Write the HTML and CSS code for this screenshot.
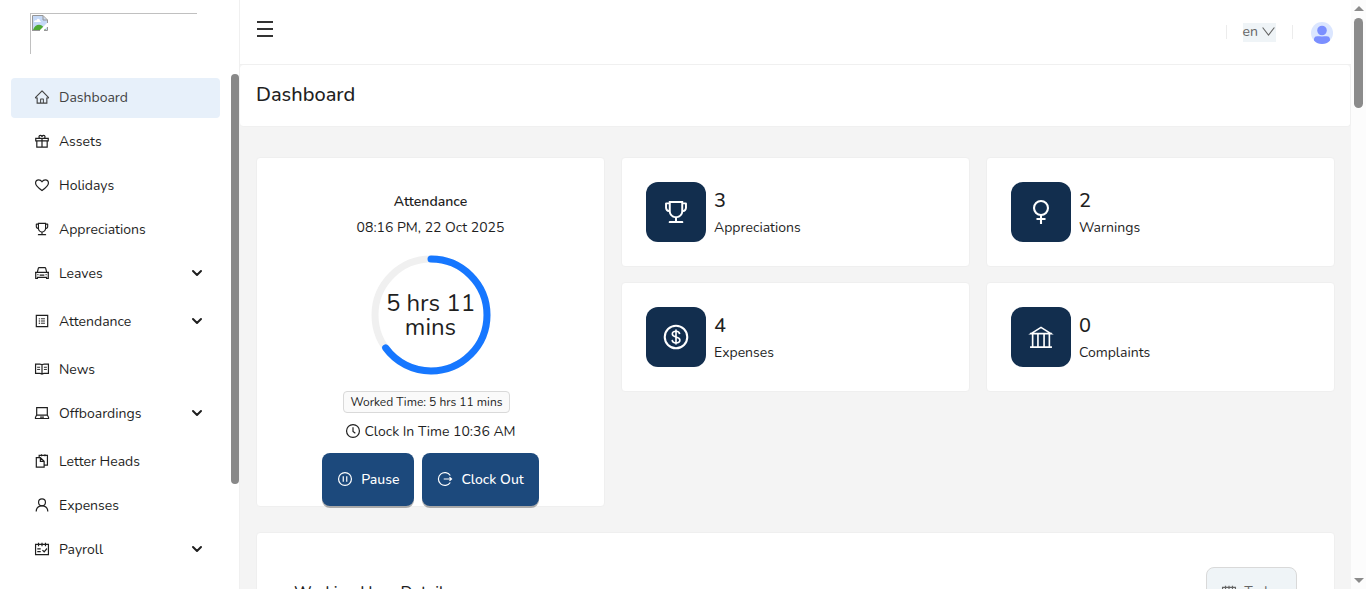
FILE: index.html
```html
<!DOCTYPE html>
<html lang="en">
<head>
<meta charset="utf-8">
<title>Dashboard</title>
<link rel="stylesheet" href="styles.css">
</head>
<body>
<svg class="sprite" aria-hidden="true">
  <symbol id="i-home" viewBox="0 0 1024 1024"><path d="M946.5 505L560.1 118.800l-25.900-25.900a31.500 31.500 0 0 0-44.400 0L77.500 505a63.900 63.900 0 0 0-18.800 46c.4 35.200 29.700 63.300 64.900 63.300h42.500V940h691.800V614.300h43.400c17.100 0 33.200-6.700 45.300-18.800a63.600 63.600 0 0 0 18.700-45.300c0-17-6.700-33.100-18.800-45.200zM568 868H456V664h112v204zm217.900-325.700V868H632V640c0-22.100-17.900-40-40-40H432c-22.100 0-40 17.900-40 40v228H238.100V542.300h-96l370-369.700 23.100 23.100L882 542.300h-96.100z"/></symbol>
  <symbol id="i-trophy" viewBox="0 0 1024 1024"><path d="M868 160h-92v-40c0-4.400-3.600-8-8-8H256c-4.400 0-8 3.600-8 8v40h-92a44 44 0 0 0-44 44v148c0 81.700 60 149.600 138.200 162C265.700 630.200 359 721.700 476 734.500v105.200H280c-17.700 0-32 14.300-32 32V904c0 4.400 3.600 8 8 8h512c4.400 0 8-3.600 8-8v-32.300c0-17.700-14.300-32-32-32H548V734.500C665 721.700 758.300 630.200 773.800 514 852 501.600 912 433.700 912 352V204a44 44 0 0 0-44-44zM184 352V232h64v207.600a92 92 0 0 1-64-87.600zm520 128c0 49.100-19.100 95.400-53.900 130.100-34.800 34.800-81 53.900-130.100 53.900h-16c-49.100 0-95.400-19.100-130.100-53.900-34.800-34.800-53.900-81-53.900-130.100V184h384v296zm136-128c0 41-26.900 75.800-64 87.600V232h64v120z"/></symbol>
  <symbol id="i-gift" viewBox="0 0 1024 1024"><g class="ln"><path d="M112 346h800v160H112zM180 506v402h664V506M512 346v562M512 346H400a98 98 0 1 1 112-98a98 98 0 1 1 112 98z"/></g></symbol>
  <symbol id="i-heart" viewBox="0 0 1024 1024"><g class="ln"><path d="M512 868C300 716 100 580 100 388c0-120 90-208 202-208 88 0 164 52 210 124 46-72 122-124 210-124 112 0 202 88 202 208 0 192-200 328-412 480z"/></g></symbol>
  <symbol id="i-car" viewBox="0 0 1024 1024"><g class="ln"><path d="M64 470h896M210 470l70-274q10-32 44-32h376q34 0 44 32l70 274M210 440l-100 70v354h110v-72h584v72h110V510l-100-70M400 600v52h224v-52"/></g><circle cx="250" cy="620" r="42"/><circle cx="774" cy="620" r="42"/></symbol>
  <symbol id="i-list" viewBox="0 0 1024 1024"><g class="ln"><path d="M148 148h728v728H148z"/></g><g class="thin"><path d="M440 370h260M440 512h260M440 654h260"/></g><circle cx="340" cy="370" r="42"/><circle cx="340" cy="512" r="42"/><circle cx="340" cy="654" r="42"/></symbol>
  <symbol id="i-read" viewBox="0 0 1024 1024"><g class="ln"><path d="M100 196h268q144 0 144 60 0-60 144-60h268v600H656q-100 0-144 50-44-50-144-50H100zM512 256v580"/></g><g class="thin"><path d="M200 400h190M200 540h190M634 400h190M634 540h190"/></g></symbol>
  <symbol id="i-laptop" viewBox="0 0 1024 1024"><g class="ln"><path d="M172 172h680v470H172zM172 642L94 790v74h836v-74l-78-148M390 770h244"/></g></symbol>
  <symbol id="i-snippets" viewBox="0 0 1024 1024"><g class="ln"><path d="M148 292h260l240 240v376H148zM408 292v240h240M330 292V150h530v620H668M480 80v130M700 80v130"/></g></symbol>
  <symbol id="i-user" viewBox="0 0 1024 1024"><g class="ln"><circle cx="512" cy="340" r="220"/><path d="M140 930c8-230 160-366 372-366s364 136 372 366"/></g></symbol>
  <symbol id="i-schedule" viewBox="0 0 1024 1024"><g class="ln"><path d="M100 212h824v660H100zM290 110v220M512 110v220M734 110v220M210 500h220M210 680h220M540 580l110 110 180-210"/></g></symbol>
  <symbol id="i-calendar" viewBox="0 0 1024 1024"><g class="ln"><path d="M100 212h824v660H100zM290 110v220M512 110v220M734 110v220"/></g></symbol>
  <symbol id="i-chevron" viewBox="0 0 12 8"><path d="M2 2l4 4 4-4" fill="none" stroke="currentColor" stroke-width="2" stroke-linecap="round" stroke-linejoin="round"/></symbol>
  <symbol id="i-down" viewBox="0 0 1024 1024"><g class="ln"><path d="M110 240l402 520 402-520"/></g></symbol>
  <symbol id="i-clock" viewBox="0 0 1024 1024"><g class="ln"><circle cx="512" cy="512" r="412"/><path d="M512 270v270l150 110"/></g></symbol>
  <symbol id="i-pause" viewBox="0 0 1024 1024"><g class="ln"><circle cx="512" cy="512" r="412"/><path d="M400 330v364M624 330v364"/></g></symbol>
  <symbol id="i-logout" viewBox="0 0 1024 1024"><g class="ln"><path d="M850 290a412 412 0 1 0 0 444M430 512h460M800 400l130 112-130 112"/></g></symbol>
  <symbol id="i-woman" viewBox="0 0 1024 1024"><g class="ln"><circle cx="512" cy="366" r="255"/><path d="M512 620v330M347 768h330"/></g></symbol>
  <symbol id="i-dollar" viewBox="0 0 1024 1024"><g class="ln"><circle cx="512" cy="512" r="412"/></g><path d="M646 410c-8-70-60-108-134-108-80 0-134 40-134 102 0 66 54 88 134 106 84 20 142 42 142 112 0 68-58 106-142 106-80 0-134-40-140-112M512 240v544" fill="none" stroke="currentColor" stroke-width="60"/></symbol>
  <symbol id="i-bank" viewBox="0 0 1024 1024"><g class="thin"><path d="M112 880h800M150 390L512 160l362 230zM112 390h800M206 390v490M400 390v490M624 390v490M818 390v490"/></g></symbol>
</svg>

<div class="app">
  <aside class="sidebar">
    <div class="brand">
      <div class="brand-image">
        <svg width="16" height="16" viewBox="0 0 16 16" aria-hidden="true">
          <path d="M0 0h11l5 5v11H0z" fill="#fff"/>
          <path d="M1 1h9.500l4.500 4.500V15H1z" fill="#c5d9f7"/>
          <path d="M2 7c0-2 2-2 2.500-1.500C5 3 8 3.500 8 6c1 0 1 1 1 1z" fill="#fff"/>
          <path d="M1 15c2-6 8-7 11-2l2 2z" fill="#4faa35"/>
          <path d="M7 16l9-9v4l-5 5z" fill="#fff"/>
          <path d="M.500 16V.500H11l4.500 4.500v3M.500 15.500H8M11 .500V5h4.500M12 15.500h3.500V12" fill="none" stroke="#969696"/>
        </svg>
      </div>
    </div>
    <div class="menu-area">
      <nav class="menu">
        <a class="item active" href="#"><svg class="icon"><use href="#i-home"/></svg>Dashboard</a>
        <a class="item" href="#"><svg class="icon"><use href="#i-gift"/></svg>Assets</a>
        <a class="item" href="#"><svg class="icon"><use href="#i-heart"/></svg>Holidays</a>
        <a class="item" href="#"><svg class="icon"><use href="#i-trophy"/></svg>Appreciations</a>
        <button class="item group"><svg class="icon"><use href="#i-car"/></svg>Leaves<svg class="chevron"><use href="#i-chevron"/></svg></button>
        <button class="item group"><svg class="icon"><use href="#i-list"/></svg>Attendance<svg class="chevron"><use href="#i-chevron"/></svg></button>
        <a class="item" href="#"><svg class="icon"><use href="#i-read"/></svg>News</a>
        <button class="item group"><svg class="icon"><use href="#i-laptop"/></svg>Offboardings<svg class="chevron"><use href="#i-chevron"/></svg></button>
        <a class="item" href="#"><svg class="icon"><use href="#i-snippets"/></svg>Letter Heads</a>
        <a class="item" href="#"><svg class="icon"><use href="#i-user"/></svg>Expenses</a>
        <button class="item group"><svg class="icon"><use href="#i-schedule"/></svg>Payroll<svg class="chevron"><use href="#i-chevron"/></svg></button>
      </nav>
      <div class="menu-thumb"></div>
    </div>
  </aside>

  <main class="main">
    <header class="topbar">
      <button class="toggle" aria-label="Toggle menu"><span></span><span></span><span></span></button>
      <div class="tools">
        <span class="divider"></span>
        <button class="lang">en<svg><use href="#i-down"/></svg></button>
        <span class="divider"></span>
        <button class="avatar" aria-label="Account">
          <svg width="22" height="22" viewBox="0 0 22 22"><defs><clipPath id="disc"><circle cx="11" cy="11" r="11"/></clipPath></defs><g clip-path="url(#disc)"><path d="M0 0h22v22H0z" fill="#dbe6ff"/><circle cx="11" cy="8.500" r="4.800" fill="#7b8fff"/><path d="M3 18c0-5 4-3.500 8-3.500s8-1.500 8 3.500v4H3z" fill="#7b8fff"/></g></svg>
        </button>
      </div>
    </header>
    <div class="page-head"><h1>Dashboard</h1></div>

    <div class="content">
      <section class="summary">
        <article class="card attendance">
          <h2>Attendance</h2>
          <p>08:16 PM, 22 Oct 2025</p>
          <div class="ring">
            <svg viewBox="0 0 120 120" aria-hidden="true"><circle cx="60" cy="60" r="56" stroke="#f0f0f0"/><circle cx="60" cy="60" r="56" stroke="#1677ff" pathLength="100" stroke-dasharray="65 100" stroke-linecap="round" transform="rotate(-90 60 60)"/></svg>
            <span>5 hrs 11 mins</span>
          </div>
          <span class="tag">Worked Time: 5 hrs 11 mins</span>
          <p class="clock-in"><svg class="icon"><use href="#i-clock"/></svg>Clock In Time 10:36 AM</p>
          <div class="actions">
            <button><svg class="icon"><use href="#i-pause"/></svg>Pause</button>
            <button><svg class="icon"><use href="#i-logout"/></svg>Clock Out</button>
          </div>
        </article>
        <div class="stats">
          <article class="card stat"><span class="badge"><svg><use href="#i-trophy"/></svg></span><div><strong>3</strong><span>Appreciations</span></div></article>
          <article class="card stat"><span class="badge"><svg><use href="#i-woman"/></svg></span><div><strong>2</strong><span>Warnings</span></div></article>
          <article class="card stat"><span class="badge"><svg><use href="#i-dollar"/></svg></span><div><strong>4</strong><span>Expenses</span></div></article>
          <article class="card stat"><span class="badge"><svg><use href="#i-bank"/></svg></span><div><strong>0</strong><span>Complaints</span></div></article>
        </div>
      </section>
      <section class="card hours">
        <h2>Working Hour Details</h2>
        <button><svg class="icon"><use href="#i-calendar"/></svg>Today</button>
      </section>
    </div>
  </main>

  <div class="page-scroll" aria-hidden="true">
    <span class="arrow up"></span><span class="thumb"></span><span class="arrow down"></span>
  </div>
</div>
</body>
</html>
```

FILE: styles.css
```css
* { box-sizing: border-box; }
body {
  margin: 0;
  color: #1f1f1f;
  background: #f4f4f4;
  font: 14px/26px Nunito, Lato, "Noto Sans", sans-serif;
}
h1, h2, p { margin: 0; }
button { font: inherit; color: inherit; border: 0; background: none; padding: 0; cursor: pointer; }
a { color: inherit; text-decoration: none; }
svg { display: block; flex: none; fill: currentColor; }
.sprite { position: absolute; width: 0; height: 0; }
.ln, .thin { fill: none; stroke: currentColor; stroke-width: 76; }
.thin { stroke-width: 60; }
.icon { width: 16px; height: 16px; }

.app { display: flex; height: 100vh; overflow: hidden; }

.sidebar {
  flex: none;
  display: flex;
  flex-direction: column;
  width: 240px;
  background: #fff;
  border-right: 1px solid #f0f0f0;
}
.brand { flex: none; height: 74px; padding: 13px 42px 20px 30px; }
.brand-image { height: 100%; padding: 1px; border: solid #c0c0c0; border-width: 1px 0 0 1px; }
.menu-area { flex: 1; display: flex; min-height: 0; }
.menu { flex: 1; padding: 4px 11px; overflow: hidden; }
.menu-thumb { width: 8px; height: 410px; border-radius: 4px; background: #888; }
.item {
  display: flex;
  align-items: center;
  gap: 9px;
  width: 100%;
  height: 40px;
  margin-bottom: 4px;
  padding: 0 17px 0 23px;
  border-radius: 4px;
}
.item svg { margin-bottom: 2px; }
.item.active { background: #e7f0fa; color: #434343; }
.group { margin-bottom: 8px; }
.chevron { width: 12px; height: 8px; margin-left: auto; }

.main { flex: 1; min-width: 0; }
.topbar {
  display: flex;
  align-items: center;
  justify-content: space-between;
  height: 65px;
  padding: 0 18px 0 17px;
  background: #fff;
  border-bottom: 1px solid #f0f0f0;
}
.toggle { display: grid; gap: 5px; width: 16px; padding-bottom: 6px; }
.toggle span { height: 2px; background: #333; }
.tools { display: flex; align-items: center; gap: 16px; }
.divider { width: 1px; height: 14px; background: #ececec; }
.lang {
  display: flex;
  align-items: center;
  gap: 3px;
  height: 19px;
  padding-bottom: 2px;
  color: #666;
  background: #eff4f7;
  line-height: 17px;
}
.lang svg { width: 15px; height: 15px; }
.avatar { margin-left: 2px; padding-top: 2px; }
.page-head { padding: 14px 16px 15px; background: #fff; border: 1px solid #f0f0f0; border-width: 0 1px 1px 0; border-radius: 4px; }
.page-head h1 { font-size: 20px; font-weight: 500; line-height: 32px; }

.content { padding: 30px 16px 0; }
.card { background: #fff; border: 1px solid #efefef; border-radius: 4px; }
.summary { display: grid; grid-template-columns: repeat(3, 1fr); column-gap: 16px; align-items: start; }
.attendance { display: flex; flex-direction: column; align-items: center; padding-top: 31px; }
.attendance h2 { font-size: 14px; font-weight: 600; }
.ring { display: grid; place-items: center; width: 120px; margin: 14px 0 16px; }
.ring svg, .ring span { grid-area: 1 / 1; }
.ring svg { width: 120px; height: 120px; fill: none; stroke-width: 7; }
.ring span { width: 96px; font-size: 24px; line-height: 24px; text-align: center; }
.tag {
  margin-right: 8px;
  padding: 0 7px;
  font-size: 12px;
  line-height: 20px;
  background: #fafafa;
  border: 1px solid #d9d9d9;
  border-radius: 4px;
}
.clock-in { display: flex; align-items: center; gap: 3px; margin: 6px 0 8px; }
.clock-in svg { margin-bottom: 2px; }
.actions { display: flex; gap: 8px; }
.actions button {
  display: flex;
  align-items: center;
  gap: 8px;
  height: 53px;
  padding: 0 15px;
  color: #fff;
  font-weight: 500;
  background: #1c497c;
  border-radius: 8px;
  box-shadow: 0 2px 0 rgba(0, 0, 0, 0.3);
}
.actions svg { margin-bottom: 2px; }
.stats { grid-column: span 2; display: grid; grid-template-columns: 1fr 1fr; gap: 15px 16px; }
.stat { display: flex; align-items: center; gap: 8px; padding: 24px; }
.stat strong { display: block; padding-top: 3px; font-size: 20px; font-weight: 500; line-height: 28px; }
.stat div span { display: block; }
.badge { display: grid; place-items: center; width: 60px; height: 60px; color: #fff; background: #122e4e; border-radius: 12px; }
.badge svg { width: 28px; height: 28px; }

.hours { display: flex; align-items: center; justify-content: space-between; margin-top: 25px; padding: 34px 37px; }
.hours h2 { font-size: 16px; font-weight: 500; }
.hours button {
  display: flex;
  align-items: center;
  gap: 7px;
  height: 50px;
  padding: 0 14px;
  color: #666;
  background: #eff4f7;
  border: 1px solid #d9d9d9;
  border-radius: 8px;
}

.page-scroll { flex: none; display: flex; flex-direction: column; align-items: center; width: 15px; padding: 6px 0; background: #fcfcfc; }
.thumb { width: 9px; height: 90px; margin-top: 7px; border-radius: 5px; background: #8b8b8b; }
.arrow { border: solid transparent; border-width: 0 5px; }
.up { border-bottom: 5px solid #8b8b8b; }
.down { margin-top: auto; border-top: 5px solid #8b8b8b; }
```
